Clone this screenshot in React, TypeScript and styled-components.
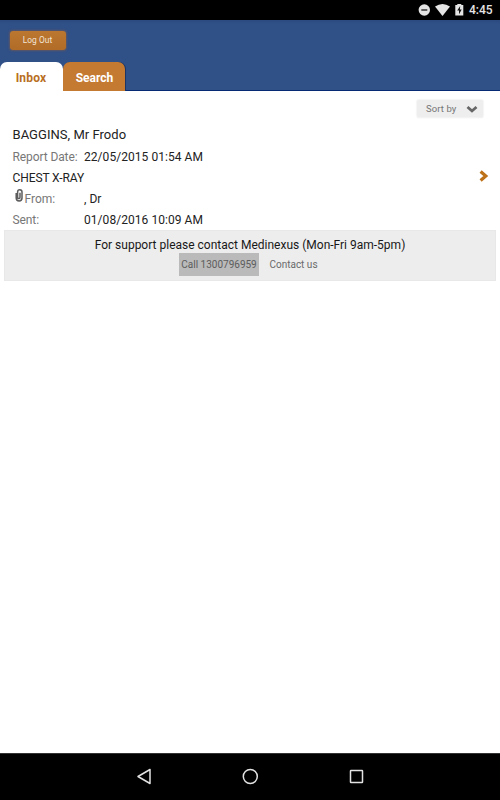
import React from "react";
import styled, { createGlobalStyle } from "styled-components";

const GlobalStyle = createGlobalStyle`
  * { box-sizing: border-box; }
  body { margin: 0; background: #fff; font-family: Roboto, sans-serif; }
  button { font-family: inherit; margin: 0; }
`;

const Screen = styled.div`
  display: flex;
  flex-direction: column;
  width: 500px;
  height: 800px;
  overflow: hidden;
  background: #fff;
`;

const StatusBar = styled.div`
  display: flex;
  flex: none;
  justify-content: flex-end;
  height: 20px;
  padding-right: 7px;
  background: #000;
`;

const Clock = styled.span`
  width: 24px;
  margin-left: 5px;
  color: #e4e4e4;
  font-size: 12px;
  font-weight: 500;
  line-height: 20px;
  white-space: nowrap;
`;

const Header = styled.header`
  display: flex;
  flex: none;
  flex-direction: column;
  justify-content: space-between;
  height: 71px;
  padding-top: 11px;
  background: linear-gradient(#2b4a7f, #305088 4px);
  box-shadow: inset 0 -1px #082a74;
`;

const LogOut = styled.button`
  width: 56px;
  height: 19px;
  margin-left: 10px;
  padding: 0 1px 0 0;
  border: 0;
  border-radius: 3px;
  background: linear-gradient(#bb7630, #b16d28);
  box-shadow: 0 0 2px 1px rgba(110, 90, 85, 0.75);
  color: #f3e4d6;
  font-size: 8.4px;
  letter-spacing: 0.05px;
  line-height: 19px;
`;

const Tabs = styled.nav`
  display: flex;
  height: 29px;
`;

const Tab = styled.button<{ $active?: boolean }>`
  width: ${(p) => (p.$active ? 63 : 62)}px;
  height: 29px;
  padding: ${(p) => (p.$active ? "3px 1px 0 0" : "3px 0 0 1px")};
  border: 0;
  border-radius: 7px 7px 0 0;
  background: ${(p) => (p.$active ? "#fff" : "#c47a31")};
  box-shadow: ${(p) => (p.$active ? "none" : "1px 0 #1b3464")};
  color: ${(p) => (p.$active ? "#b86f22" : "#fff")};
  font-size: 12px;
  font-weight: 700;
  letter-spacing: ${(p) => (p.$active ? 0.2 : 0)}px;
  line-height: 26px;
`;

const Content = styled.main`
  display: flex;
  flex: 1;
  flex-direction: column;
  padding: 9px 4px 0;
`;

const SortButton = styled.button`
  display: flex;
  align-items: center;
  align-self: flex-end;
  width: 66px;
  height: 17px;
  margin-right: 13px;
  padding: 0 5px 0 9px;
  justify-content: space-between;
  border: 0;
  border-radius: 2px;
  background: #eee;
  box-shadow: 0 0 1px 1px #f5f5f5, 0 1px 1px #ddd;
  color: #757575;
  font-size: 9.5px;
  letter-spacing: 0.1px;
`;

const Report = styled.article`
  display: flex;
  align-items: center;
  height: 113px;
  padding: 0 7px 0 8.5px;
`;

const Details = styled.div`
  flex: 1;
  padding-top: 8px;
`;

const Line = styled.div<{ $height?: number; $size?: number; $spacing?: number }>`
  display: flex;
  height: ${(p) => p.$height ?? 21.3}px;
  align-items: center;
  color: #222;
  font-size: ${(p) => p.$size ?? 12}px;
  letter-spacing: ${(p) => p.$spacing ?? 0.05}px;
  white-space: pre;
`;

const Label = styled.span<{ $spacing?: number }>`
  display: flex;
  width: 71.5px;
  color: #777;
  letter-spacing: ${(p) => p.$spacing ?? 0}px;
`;

const Support = styled.footer`
  display: flex;
  flex-direction: column;
  align-items: center;
  height: 51px;
  padding-top: 4px;
  border: 1px solid #e8e8e8;
  background: #ededed;
`;

const SupportText = styled.div`
  height: 18px;
  color: #181818;
  font-size: 12px;
  line-height: 20px;
  white-space: nowrap;
`;

const SupportLinks = styled.div`
  display: flex;
  margin-left: 6px;
`;

const SupportLink = styled.a<{ $pressed?: boolean }>`
  width: ${(p) => (p.$pressed ? 80 : 68)}px;
  height: 23px;
  padding-left: ${(p) => (p.$pressed ? 0 : 1)}px;
  background: ${(p) => (p.$pressed ? "#bababa" : "transparent")};
  color: ${(p) => (p.$pressed ? "#5c5c5c" : "#6a6a6a")};
  font-size: 10px;
  line-height: 23px;
  text-align: center;
  white-space: nowrap;
`;

const NavBar = styled.div`
  display: flex;
  flex: none;
  justify-content: center;
  gap: 82px;
  height: 47px;
  padding-top: 11px;
  border-top: 1px solid #333;
  background: #000;
`;

const StatusIcons = () => (
  <svg width="47" height="20" viewBox="417 0 47 20">
    <circle cx="424.3" cy="10" r="5.7" fill="#e4e4e4" />
    <path d="M421.3 10h6" stroke="#333" strokeWidth="1.5" />
    <path d="M435 6.6q7.5-5 15 0L442.5 16z" fill="#e4e4e4" />
    <path d="M455.3 5h2V4h4v1h2v10.5h-8z" fill="#e4e4e4" />
    <path d="M460.2 6l-3 4.6h1.8v3.7l2.7-4.8h-1.8z" fill="#111" />
  </svg>
);

const ClipIcon = styled.svg`
  margin-top: -4px;
  margin-bottom: 3px;
`;

const Clip = () => (
  <ClipIcon width="12" height="15" viewBox="0 0 12 15">
    <path
      d="M3.2 5v5a2.8 2.8 0 0 0 5.8 0V4a2.2 2.2 0 0 0-4.4 0v5.4a1.2 1.2 0 0 0 2.4 0V4.8"
      fill="none"
      stroke="#5c5c5c"
      strokeWidth="1.5"
    />
  </ClipIcon>
);

const Chevron = styled.svg`
  margin-top: 5px;
`;

export default function App() {
  return (
    <Screen>
      <GlobalStyle />
      <StatusBar>
        <StatusIcons />
        <Clock>4:45</Clock>
      </StatusBar>
      <Header>
        <LogOut>Log Out</LogOut>
        <Tabs>
          <Tab $active>Inbox</Tab>
          <Tab>Search</Tab>
        </Tabs>
      </Header>
      <Content>
        <SortButton>
          Sort by
          <svg width="12" height="8" viewBox="0 0 12 8">
            <path d="M1.5 2L6 6l4.5-4" fill="none" stroke="#666" strokeWidth="2.8" />
          </svg>
        </SortButton>
        <Report>
          <Details>
            <Line $height={22} $size={13} $spacing={0.04}>BAGGINS, Mr Frodo</Line>
            <Line>
              <Label $spacing={-0.1}>Report Date:</Label>22/05/2015 01:54 AM
            </Line>
            <Line $spacing={-0.1}>CHEST X-RAY</Line>
            <Line>
              <Label><Clip />From:</Label>, Dr
            </Line>
            <Line>
              <Label $spacing={-0.1}>Sent:</Label>01/08/2016 10:09 AM
            </Line>
          </Details>
          <Chevron width="10" height="12" viewBox="0 0 10 12">
            <path d="M1.6 1.5L6.8 6l-5.2 4.5" fill="none" stroke="#bd7118" strokeWidth="3.2" />
          </Chevron>
        </Report>
        <Support>
          <SupportText>For support please contact Medinexus (Mon-Fri 9am-5pm)</SupportText>
          <SupportLinks>
            <SupportLink $pressed>Call 1300796959</SupportLink>
            <SupportLink>Contact us</SupportLink>
          </SupportLinks>
        </Support>
      </Content>
      <NavBar>
        <svg width="24" height="24" viewBox="0 0 24 24">
          <path d="M18 4.5v14L6 11.5z" fill="none" stroke="#e2e2e2" strokeWidth="1.5" strokeLinejoin="round" />
        </svg>
        <svg width="24" height="24" viewBox="0 0 24 24">
          <circle cx="12.3" cy="11.5" r="7" fill="none" stroke="#e2e2e2" strokeWidth="1.5" />
        </svg>
        <svg width="24" height="24" viewBox="0 0 24 24">
          <rect x="6.5" y="5.5" width="12" height="12" rx="0.5" fill="none" stroke="#e2e2e2" strokeWidth="1.5" />
        </svg>
      </NavBar>
    </Screen>
  );
}
